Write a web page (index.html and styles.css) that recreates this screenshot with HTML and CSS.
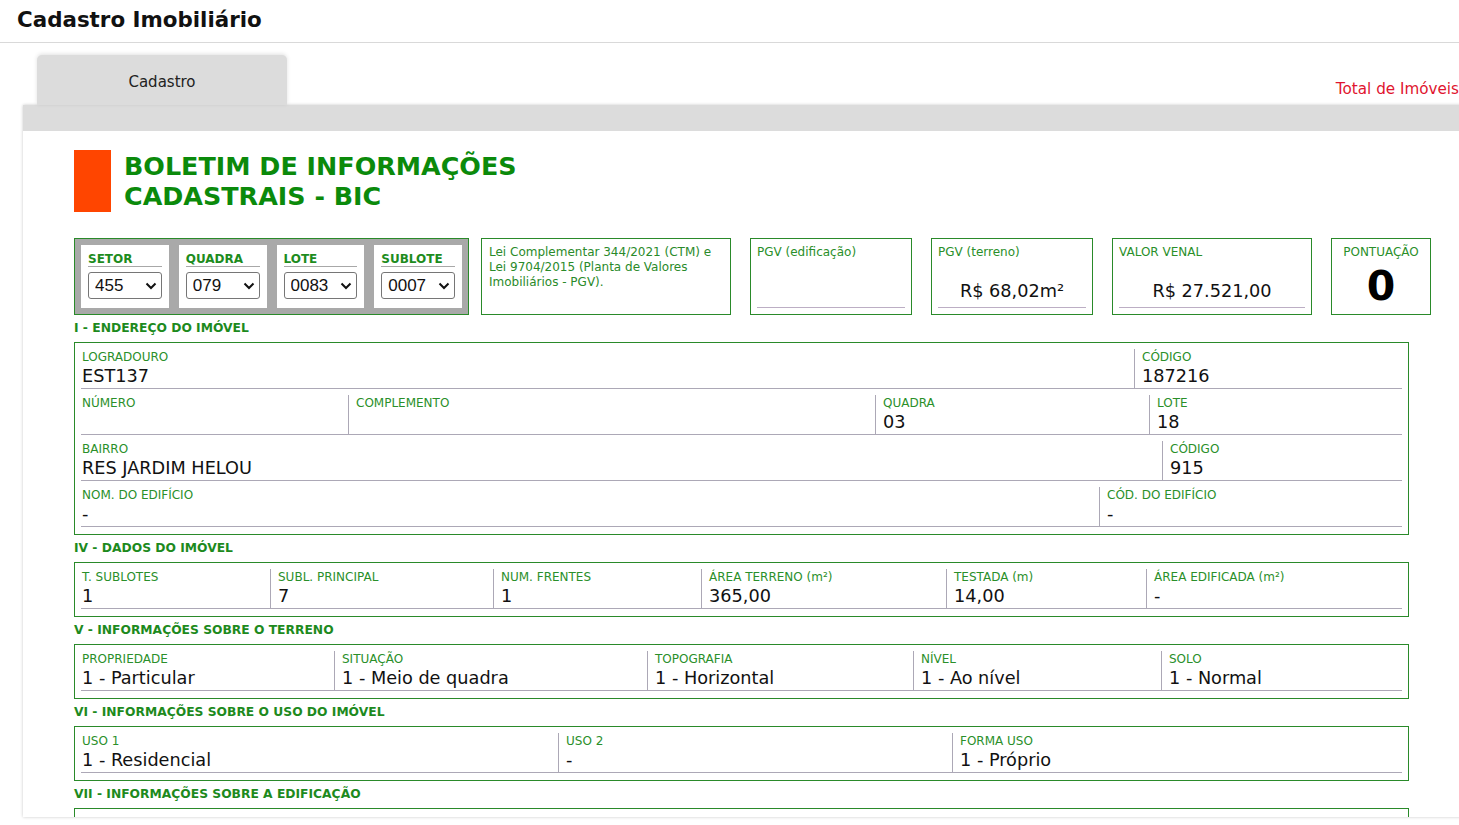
FILE: index.html
```html
<!DOCTYPE html>
<html lang="pt-BR">
<head>
<meta charset="utf-8">
<title>Cadastro Imobiliário</title>
<link rel="stylesheet" href="styles.css">
</head>
<body>
<header class="topbar"><h1>Cadastro Imobiliário</h1></header>
<main class="tabs-area">
  <div class="tabbar">
    <div class="tab">Cadastro</div>
    <div class="total">Total de Imóveis</div>
  </div>
  <section class="panel">
    <div class="panel-strip"></div>
    <div class="panel-body">
      <div class="bic-title">
        <div class="bic-mark"></div>
        <h2>BOLETIM DE INFORMAÇÕES<br>CADASTRAIS - BIC</h2>
      </div>

      <div class="info-row">
        <div class="selector-box">
          <div class="sel-cell">
            <div class="sel-label">SETOR</div>
            <div class="sel-wrap"><select class="sel"><option>455</option></select><svg class="chev" viewBox="0 0 12 8" width="12" height="8"><path d="M1.5 1.5 L6 6 L10.5 1.5" fill="none" stroke="#111" stroke-width="2"/></svg></div>
          </div>
          <div class="sel-cell">
            <div class="sel-label">QUADRA</div>
            <div class="sel-wrap"><select class="sel"><option>079</option></select><svg class="chev" viewBox="0 0 12 8" width="12" height="8"><path d="M1.5 1.5 L6 6 L10.5 1.5" fill="none" stroke="#111" stroke-width="2"/></svg></div>
          </div>
          <div class="sel-cell">
            <div class="sel-label">LOTE</div>
            <div class="sel-wrap"><select class="sel"><option>0083</option></select><svg class="chev" viewBox="0 0 12 8" width="12" height="8"><path d="M1.5 1.5 L6 6 L10.5 1.5" fill="none" stroke="#111" stroke-width="2"/></svg></div>
          </div>
          <div class="sel-cell">
            <div class="sel-label">SUBLOTE</div>
            <div class="sel-wrap"><select class="sel"><option>0007</option></select><svg class="chev" viewBox="0 0 12 8" width="12" height="8"><path d="M1.5 1.5 L6 6 L10.5 1.5" fill="none" stroke="#111" stroke-width="2"/></svg></div>
          </div>
        </div>
        <div class="info-box law">Lei Complementar 344/2021 (CTM) e Lei 9704/2015 (Planta de Valores Imobiliários - PGV).</div>
        <div class="info-box pgv-e">
          <div class="info-label">PGV (edificação)</div>
          <div class="info-value"></div>
        </div>
        <div class="info-box pgv-t">
          <div class="info-label">PGV (terreno)</div>
          <div class="info-value">R$ 68,02m²</div>
        </div>
        <div class="info-box venal">
          <div class="info-label">VALOR VENAL</div>
          <div class="info-value">R$ 27.521,00</div>
        </div>
        <div class="info-box score">
          <div class="info-label">PONTUAÇÃO</div>
          <div class="score-value">0</div>
        </div>
      </div>

      <h3 class="sec-title">I - ENDEREÇO DO IMÓVEL</h3>
      <div class="sec-box">
        <div class="frow cols-a1">
          <div class="fcell"><div class="flabel">LOGRADOURO</div><div class="fvalue">EST137</div></div>
          <div class="fcell"><div class="flabel">CÓDIGO</div><div class="fvalue">187216</div></div>
        </div>
        <div class="frow cols-a2">
          <div class="fcell"><div class="flabel">NÚMERO</div><div class="fvalue"></div></div>
          <div class="fcell"><div class="flabel">COMPLEMENTO</div><div class="fvalue"></div></div>
          <div class="fcell"><div class="flabel">QUADRA</div><div class="fvalue">03</div></div>
          <div class="fcell"><div class="flabel">LOTE</div><div class="fvalue">18</div></div>
        </div>
        <div class="frow cols-a3">
          <div class="fcell"><div class="flabel">BAIRRO</div><div class="fvalue">RES JARDIM HELOU</div></div>
          <div class="fcell"><div class="flabel">CÓDIGO</div><div class="fvalue">915</div></div>
        </div>
        <div class="frow cols-a4">
          <div class="fcell"><div class="flabel">NOM. DO EDIFÍCIO</div><div class="fvalue">-</div></div>
          <div class="fcell"><div class="flabel">CÓD. DO EDIFÍCIO</div><div class="fvalue">-</div></div>
        </div>
      </div>

      <h3 class="sec-title">IV - DADOS DO IMÓVEL</h3>
      <div class="sec-box">
        <div class="frow cols-iv">
          <div class="fcell"><div class="flabel">T. SUBLOTES</div><div class="fvalue">1</div></div>
          <div class="fcell"><div class="flabel">SUBL. PRINCIPAL</div><div class="fvalue">7</div></div>
          <div class="fcell"><div class="flabel">NUM. FRENTES</div><div class="fvalue">1</div></div>
          <div class="fcell"><div class="flabel">ÁREA TERRENO (m²)</div><div class="fvalue">365,00</div></div>
          <div class="fcell"><div class="flabel">TESTADA (m)</div><div class="fvalue">14,00</div></div>
          <div class="fcell"><div class="flabel">ÁREA EDIFICADA (m²)</div><div class="fvalue">-</div></div>
        </div>
      </div>

      <h3 class="sec-title">V - INFORMAÇÕES SOBRE O TERRENO</h3>
      <div class="sec-box">
        <div class="frow cols-v">
          <div class="fcell"><div class="flabel">PROPRIEDADE</div><div class="fvalue">1 - Particular</div></div>
          <div class="fcell"><div class="flabel">SITUAÇÃO</div><div class="fvalue">1 - Meio de quadra</div></div>
          <div class="fcell"><div class="flabel">TOPOGRAFIA</div><div class="fvalue">1 - Horizontal</div></div>
          <div class="fcell"><div class="flabel">NÍVEL</div><div class="fvalue">1 - Ao nível</div></div>
          <div class="fcell"><div class="flabel">SOLO</div><div class="fvalue">1 - Normal</div></div>
        </div>
      </div>

      <h3 class="sec-title">VI - INFORMAÇÕES SOBRE O USO DO IMÓVEL</h3>
      <div class="sec-box">
        <div class="frow cols-vi">
          <div class="fcell"><div class="flabel">USO 1</div><div class="fvalue">1 - Residencial</div></div>
          <div class="fcell"><div class="flabel">USO 2</div><div class="fvalue">-</div></div>
          <div class="fcell"><div class="flabel">FORMA USO</div><div class="fvalue">1 - Próprio</div></div>
        </div>
      </div>

      <h3 class="sec-title">VII - INFORMAÇÕES SOBRE A EDIFICAÇÃO</h3>
      <div class="sec-box">
        <div class="frow cols-vi">
          <div class="fcell"><div class="flabel">&nbsp;</div><div class="fvalue"></div></div>
        </div>
      </div>
    </div>
  </section>
</main>
</body>
</html>
```
FILE: styles.css
```css
* { box-sizing: border-box; }
html, body { margin: 0; padding: 0; overflow: hidden; background: #fff; }
body {
  font-family: Verdana, "DejaVu Sans", sans-serif;
  color: #111;
  width: 1459px;
  height: 825px;
}

.topbar {
  height: 43px;
  border-bottom: 1px solid #d9d9d9;
  padding-left: 17px;
}
.topbar h1 {
  margin: 0;
  font-size: 21.4px;
  line-height: 40px;
  font-weight: bold;
  color: #111;
}

.tabs-area {
  padding-left: 23px;
}
.tabbar {
  display: flex;
  justify-content: space-between;
  align-items: flex-end;
  height: 62px;
}
.tab {
  margin-left: 14px;
  width: 250px;
  height: 50px;
  background: #dcdcdc;
  border-radius: 5px 5px 0 0;
  box-shadow: 0 -1px 4px rgba(0,0,0,0.12);
  display: flex;
  align-items: center;
  justify-content: center;
  font-size: 15px;
  color: #222;
  padding-top: 4px;
  position: relative;
  z-index: 1;
}
.total {
  font-size: 15.2px;
  color: #e0142e;
  line-height: 16px;
  padding-bottom: 8px;
  white-space: nowrap;
}

.panel {
  height: 712px;
  overflow: hidden;
  margin-right: -20px;
  background: #fff;
  box-shadow: 0 0 3px rgba(0,0,0,0.22);
}
.panel-strip {
  height: 26px;
  background: #dcdcdc;
}
.panel-body {
  padding: 19px 0 0 51px;
}

.bic-title {
  display: flex;
  gap: 13px;
  align-items: flex-start;
}
.bic-mark {
  width: 37px;
  height: 62px;
  background: #ff4500;
}
.bic-title h2 {
  margin: 0;
  font-size: 25.4px;
  line-height: 30px;
  padding-top: 1px;
  font-weight: bold;
  color: #0b8a0b;
}

.info-row {
  display: flex;
  gap: 19px;
  margin-top: 26px;
  margin-bottom: 1px;
  height: 77px;
}
.selector-box {
  width: 395px;
  height: 77px;
  border: 1px solid #2a8a2a;
  background: #a9a9a9;
  padding: 6px;
  display: flex;
  gap: 10px;
  margin-right: -7px;
}
.sel-cell {
  flex: 1;
  background: #fff;
  padding: 7px 7px 0 7px;
}
.sel-label {
  font-size: 12px;
  line-height: 14px;
  font-weight: bold;
  color: #1d8c1d;
  border-bottom: 1px solid #a8a8a8;
}
.sel-wrap {
  position: relative;
  margin-top: 5px;
  height: 27px;
}
.sel {
  appearance: none;
  -webkit-appearance: none;
  width: 100%;
  height: 27px;
  border: 1px solid #767676;
  border-radius: 3px;
  background: #fff;
  font-family: "Liberation Sans", Arial, sans-serif;
  font-size: 17px;
  color: #111;
  padding: 0 0 0 6px;
  margin: 0;
}
.chev {
  position: absolute;
  right: 5px;
  top: 10px;
  pointer-events: none;
}

.info-box {
  height: 77px;
  border: 1px solid #2a8a2a;
  padding: 6px;
  display: flex;
  flex-direction: column;
}
.law {
  width: 250px;
  display: block;
  padding: 6px 7px;
  font-size: 12px;
  line-height: 15px;
  color: #2a8a2a;
}
.pgv-e { width: 162px; }
.pgv-t { width: 162px; }
.venal { width: 200px; }
.score { width: 100px; align-items: center; }
.info-label {
  font-size: 12px;
  line-height: 15px;
  color: #2a8f2a;
}
.info-value {
  margin-top: auto;
  height: 32px;
  line-height: 31px;
  text-align: center;
  font-size: 17.7px;
  color: #111;
  border-bottom: 1px solid #bcaec4;
}
.score-value {
  margin-top: 3px;
  font-size: 41px;
  line-height: 46px;
  font-weight: bold;
  color: #000;
}

.sec-title {
  margin: 5px 0 6px 0;
  font-size: 12.3px;
  line-height: 16px;
  font-weight: bold;
  color: #1d8a1d;
}
.sec-box {
  width: 1335px;
  border: 1px solid #2a8a2a;
  padding: 0 6px 7px 6px;
}
.frow {
  display: grid;
  margin-top: 6px;
  border-bottom: 1px solid #aca8b6;
}
.cols-a1 { grid-template-columns: 1053px 1fr; }
.cols-a2 { grid-template-columns: 267px 527px 274px 1fr; }
.cols-a3 { grid-template-columns: 1081px 1fr; }
.cols-a4 { grid-template-columns: 1018px 1fr; }
.cols-iv { grid-template-columns: 189px 223px 208px 245px 200px 1fr; }
.cols-v { grid-template-columns: 253px 313px 266px 248px 1fr; }
.cols-vi { grid-template-columns: 477px 394px 1fr; }

.fcell {
  padding-left: 7px;
  border-left: 1px solid #aca8b6;
  min-width: 0;
}
.fcell:first-child {
  padding-left: 1px;
  border-left: 0;
}
.flabel {
  font-size: 12px;
  line-height: 14px;
  padding-top: 1px;
  color: #2a8f2a;
  white-space: nowrap;
}
.fvalue {
  font-size: 17.7px;
  line-height: 24px;
  height: 24px;
  color: #111;
  white-space: nowrap;
}
```
